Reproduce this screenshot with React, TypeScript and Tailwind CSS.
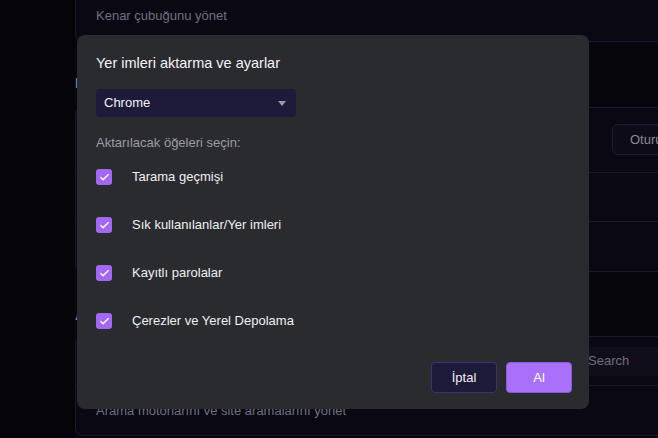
import { Check } from 'lucide-react';

const font = { fontFamily: '"Liberation Sans", Arial, sans-serif' };

const items = ['Tarama geçmişi', 'Sık kullanılanlar/Yer imleri', 'Kayıtlı parolalar', 'Çerezler ve Yerel Depolama'];

export default function App() {
  return (
    <div className="relative h-[438px] w-[658px] overflow-hidden bg-[#07060c]" style={font}>
      {/* Background settings page */}
      <div className="flex h-full">
        <div className="w-[75px] shrink-0 bg-[#050409]" />
        <div className="flex min-w-0 flex-1 flex-col">
          <div className="-mt-[10px] w-[700px] rounded-b-lg border border-[#1b1836] bg-[#0a0913]">
            <div className="flex h-[50px] items-center px-5 text-[13px] text-[#6f6f80]">Kenar çubuğunu yönet</div>
          </div>

          <div className="mt-[30px] text-[15px] font-semibold text-[#7585a8]">Embedded tarayıcı</div>

          <div className="mt-[12px] w-[700px] rounded-lg border border-[#1b1836] bg-[#0a0913]">
            <div className="flex h-[65px] items-center border-b border-[#1b1836] pl-5">
              <span className="w-[516px] shrink-0 text-[13px] text-[#6f6f80]">Hesap</span>
              <span className="flex h-[31px] items-center rounded-md border border-[#1f1c38] bg-[#0c0b17] px-[17px] text-[13px] text-[#8a8a98]">Oturum</span>
            </div>
            <div className="flex h-[49px] items-center border-b border-[#1b1836] pl-5 text-[13px] text-[#6f6f80]">Yer imleri</div>
            <div className="flex h-[49px] items-center pl-5 text-[13px] text-[#6f6f80]">Geçmiş</div>
          </div>

          <div className="mt-[32px] text-[15px] font-semibold text-[#7585a8]">Arama</div>

          <div className="mt-[10px] w-[700px] rounded-lg border border-[#1b1836] bg-[#0a0913]">
            <div className="flex h-[49px] items-center border-b border-[#1b1836] pl-5">
              <span className="w-[479px] shrink-0 text-[13px] text-[#6f6f80]">Arama motoru</span>
              <span className="flex h-[29px] w-[150px] items-center rounded bg-[#0f0e1a] pl-[13px] text-[13px] text-[#6f6f80]">Search</span>
            </div>
            <div className="flex h-[49px] items-center pl-5 text-[13px] text-[#6f6f80]">Arama motorlarını ve site aramalarını yönet</div>
          </div>
        </div>
      </div>

      {/* Dialog */}
      <div className="absolute left-[77px] top-[35px] flex w-[512px] flex-col rounded-lg bg-[#2a2b2f] pb-4 pl-[19px] pr-[17px] pt-[18px]">
        <h2 className="text-[14.5px] leading-5 text-[#f4f4f6]">Yer imleri aktarma ve ayarlar</h2>

        <button className="mt-4 flex h-[28px] w-[200px] items-center justify-between rounded bg-[#1d1a3a] pl-2 pr-[10px] text-[13px] text-[#f2f2f4]">
          Chrome
          <svg width="8" height="5" viewBox="0 0 8 5">
            <path d="M0 0h8L4 5z" fill="#9b9aa6" />
          </svg>
        </button>

        <div className="mt-[17px] text-[13px] leading-[18px] text-[#9c9ca3]">Aktarılacak öğeleri seçin:</div>

        <div className="mt-[17px] flex flex-col gap-8">
          {items.map((label) => (
            <label key={label} className="flex h-4 items-center gap-5">
              <span className="flex h-4 w-4 items-center justify-center rounded-[3px] bg-[#a366f5]">
                <Check className="h-[11px] w-[11px] text-white" strokeWidth={3} />
              </span>
              <span className="text-[13px] text-[#f0f0f2]">{label}</span>
            </label>
          ))}
        </div>

        <div className="mt-[33px] flex justify-end gap-[9px]">
          <button className="h-[31px] w-[66px] rounded border border-[#3b3270] bg-[#1d1a3a] text-[13px] text-[#f2f2f4]">İptal</button>
          <button className="h-[31px] w-[66px] rounded border border-[#8a58d8] bg-[#a970fc] text-[13px] text-white">Al</button>
        </div>
      </div>
    </div>
  );
}
